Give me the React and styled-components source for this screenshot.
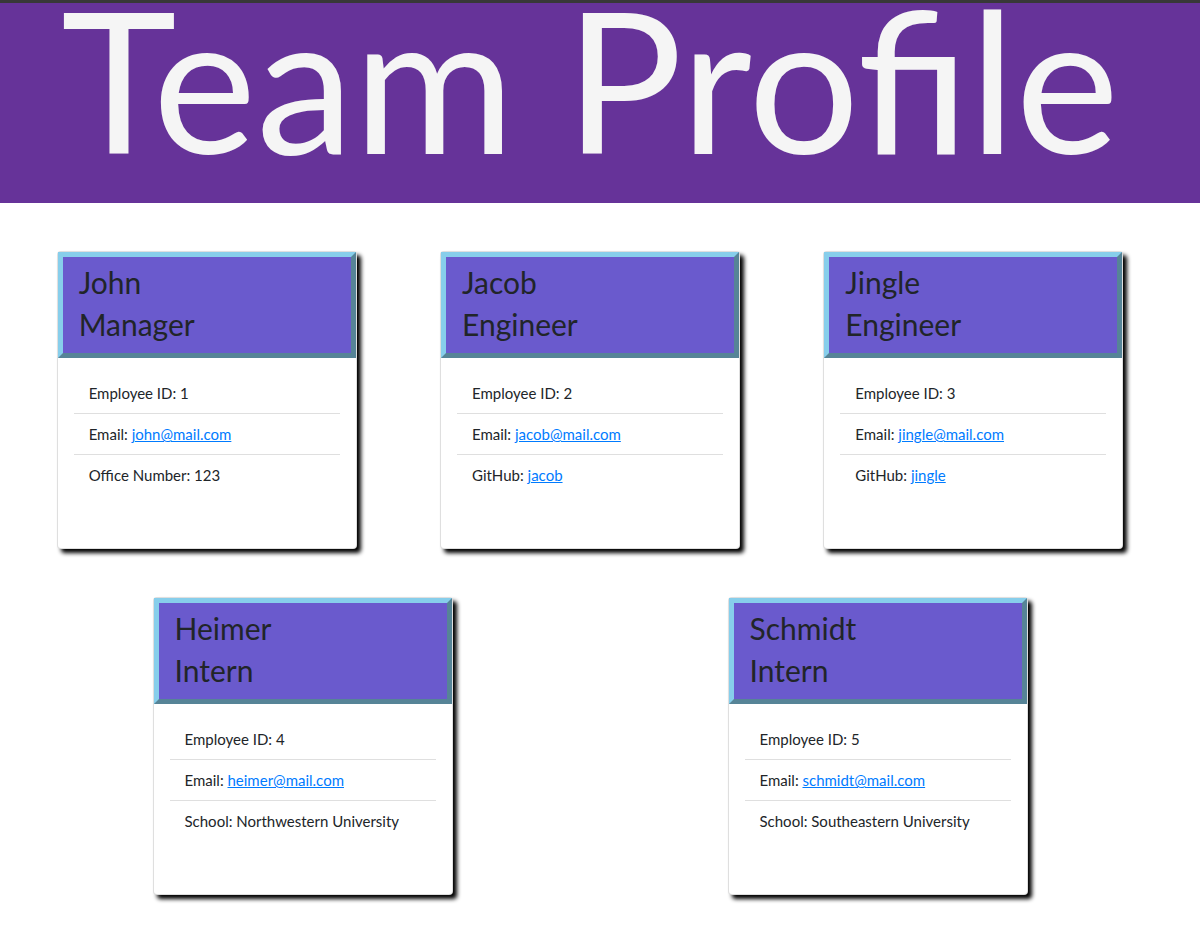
import React from 'react';
import styled, { createGlobalStyle } from 'styled-components';

const GlobalStyle = createGlobalStyle`
  body {
    margin: 0;
    background: #ffffff;
    font-family: Lato, "Noto Sans", sans-serif;
    color: #212529;
  }
`;

const Jumbo = styled.header`
  height: 200px;
  border-top: 3px solid #383838;
  background-color: #663399;
`;

const Title = styled.h1`
  width: 1150px;
  margin: 0 0 0 15px;
  font-family: Lato, sans-serif;
  font-size: 196px;
  font-weight: 400;
  line-height: 152px;
  text-align: center;
  color: #f5f5f5;
`;

const Main = styled.main`
  width: 1150px;
  margin: 48px 0 0 15px;
  padding-bottom: 20px;
  display: flex;
  flex-direction: column;
  gap: 48px;
`;

const Row = styled.div`
  display: flex;
  justify-content: space-around;
`;

const Card = styled.section`
  box-sizing: border-box;
  width: 300px;
  height: 298px;
  background: #ffffff;
  border: 1px solid rgba(0, 0, 0, 0.125);
  border-radius: 4px;
  box-shadow: 4px 4px 4px #000000;
`;

const CardHeader = styled.div`
  padding: 4px 16px 8px;
  background-color: #6a5acd;
  border: 5px outset skyblue;
  font-size: 30px;
  line-height: 42px;
  color: #212529;
`;

const CardBody = styled.div`
  padding: 15px 16px 16px;
`;

const List = styled.ul`
  margin: 0;
  padding: 0;
  list-style: none;
`;

const Item = styled.li`
  padding: 10px 15px;
  font-size: 15px;
  line-height: 20px;
  & + & {
    border-top: 1px solid rgba(0, 0, 0, 0.125);
  }
`;

const Link = styled.a`
  color: #007bff;
  text-decoration: underline;
`;

const team = [
  [
    { name: 'John', role: 'Manager', id: 1, email: 'john@mail.com', extra: ['Office Number', '123'] },
    { name: 'Jacob', role: 'Engineer', id: 2, email: 'jacob@mail.com', extra: ['GitHub', 'jacob', true] },
    { name: 'Jingle', role: 'Engineer', id: 3, email: 'jingle@mail.com', extra: ['GitHub', 'jingle', true] },
  ],
  [
    { name: 'Heimer', role: 'Intern', id: 4, email: 'heimer@mail.com', extra: ['School', 'Northwestern University'] },
    { name: 'Schmidt', role: 'Intern', id: 5, email: 'schmidt@mail.com', extra: ['School', 'Southeastern University'] },
  ],
];

const EmployeeCard = ({ name, role, id, email, extra }) => (
  <Card>
    <CardHeader>
      <div>{name}</div>
      <div>{role}</div>
    </CardHeader>
    <CardBody>
      <List>
        <Item>Employee ID: {id}</Item>
        <Item>
          Email: <Link href={`mailto:${email}`}>{email}</Link>
        </Item>
        <Item>
          {extra[0]}: {extra[2] ? <Link href="#">{extra[1]}</Link> : extra[1]}
        </Item>
      </List>
    </CardBody>
  </Card>
);

export default function App() {
  return (
    <>
      <GlobalStyle />
      <Jumbo>
        <Title>Team Profile</Title>
      </Jumbo>
      <Main>
        {team.map((row, i) => (
          <Row key={i}>
            {row.map((e) => (
              <EmployeeCard key={e.id} {...e} />
            ))}
          </Row>
        ))}
      </Main>
    </>
  );
}
